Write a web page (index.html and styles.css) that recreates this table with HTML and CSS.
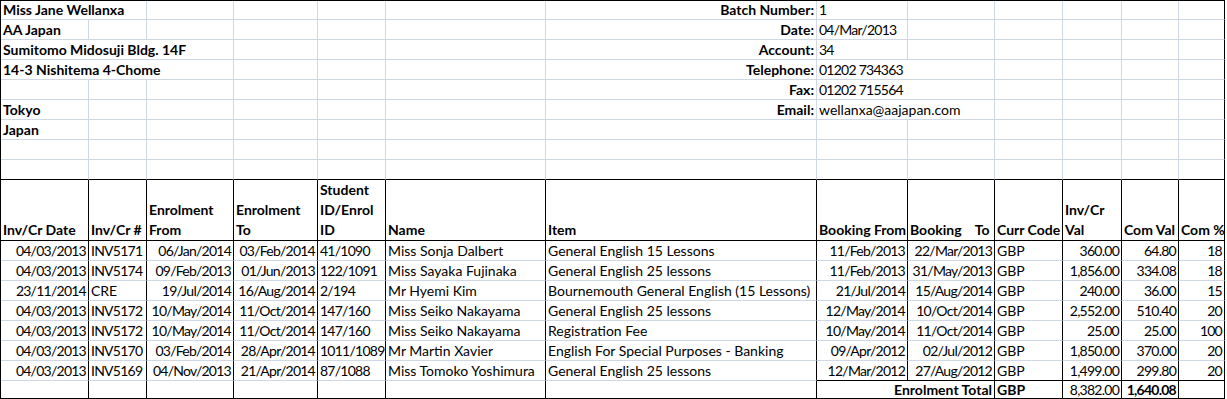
FILE: index.html
```html
<!DOCTYPE html>
<html lang="en">
<head>
<meta charset="utf-8">
<title>Enrolment Statement</title>
<link rel="stylesheet" href="styles.css">
</head>
<body>
<div class="sheet">
  <!-- row 1 -->
  <div class="c s2 b">Miss Jane Wellanxa</div><div class="c"></div><div class="c"></div><div class="c"></div><div class="c"></div>
  <div class="c r b">Batch Number:</div><div class="c n">1</div><div class="c"></div><div class="c"></div><div class="c"></div><div class="c"></div><div class="c k"></div>
  <!-- row 2 -->
  <div class="c b">AA Japan</div><div class="c"></div><div class="c"></div><div class="c"></div><div class="c"></div><div class="c"></div>
  <div class="c r b">Date:</div><div class="c n">04/Mar/2013</div><div class="c"></div><div class="c"></div><div class="c"></div><div class="c"></div><div class="c k"></div>
  <!-- row 3 -->
  <div class="c s3 b">Sumitomo Midosuji Bldg. 14F</div><div class="c"></div><div class="c"></div><div class="c"></div>
  <div class="c r b">Account:</div><div class="c n">34</div><div class="c"></div><div class="c"></div><div class="c"></div><div class="c"></div><div class="c k"></div>
  <!-- row 4 -->
  <div class="c s3 b">14-3 Nishitema 4-Chome</div><div class="c"></div><div class="c"></div><div class="c"></div>
  <div class="c r b">Telephone:</div><div class="c s2 n">01202 734363</div><div class="c"></div><div class="c"></div><div class="c"></div><div class="c k"></div>
  <!-- row 5 -->
  <div class="c"></div><div class="c"></div><div class="c"></div><div class="c"></div><div class="c"></div><div class="c"></div>
  <div class="c r b">Fax:</div><div class="c s2 n">01202 715564</div><div class="c"></div><div class="c"></div><div class="c"></div><div class="c k"></div>
  <!-- row 6 -->
  <div class="c b">Tokyo</div><div class="c"></div><div class="c"></div><div class="c"></div><div class="c"></div><div class="c"></div>
  <div class="c r b">Email:</div><div class="c s2">wellanxa@aajapan.com</div><div class="c"></div><div class="c"></div><div class="c"></div><div class="c k"></div>
  <!-- row 7 -->
  <div class="c b">Japan</div><div class="c"></div><div class="c"></div><div class="c"></div><div class="c"></div><div class="c"></div>
  <div class="c"></div><div class="c"></div><div class="c"></div><div class="c"></div><div class="c"></div><div class="c"></div><div class="c k"></div>
  <!-- row 8 -->
  <div class="c"></div><div class="c"></div><div class="c"></div><div class="c"></div><div class="c"></div><div class="c"></div>
  <div class="c"></div><div class="c"></div><div class="c"></div><div class="c"></div><div class="c"></div><div class="c"></div><div class="c k"></div>
  <!-- row 9 -->
  <div class="c u"></div><div class="c u"></div><div class="c u"></div><div class="c u"></div><div class="c u"></div><div class="c u"></div>
  <div class="c u"></div><div class="c u"></div><div class="c u"></div><div class="c u"></div><div class="c u"></div><div class="c u"></div><div class="c u k"></div>

  <!-- header -->
  <div class="c h"><span>Inv/Cr Date</span></div>
  <div class="c h"><span>Inv/Cr #</span></div>
  <div class="c h"><span>Enrolment<br>From</span></div>
  <div class="c h"><span>Enrolment<br>To</span></div>
  <div class="c h"><span>Student<br>ID/Enrol<br>ID</span></div>
  <div class="c h"><span>Name</span></div>
  <div class="c h"><span>Item</span></div>
  <div class="c h"><span>Booking From</span></div>
  <div class="c h"><span>Booking&nbsp;&nbsp;&nbsp; To</span></div>
  <div class="c h"><span>Curr Code</span></div>
  <div class="c h"><span>Inv/Cr<br>Val</span></div>
  <div class="c h"><span>Com Val</span></div>
  <div class="c h"><span>Com %</span></div>

  <!-- data 1 -->
  <div class="c d r n">04/03/2013</div><div class="c d n">INV5171</div><div class="c d r n">06/Jan/2014</div><div class="c d r n">03/Feb/2014</div><div class="c d n">41/1090</div><div class="c d">Miss Sonja Dalbert</div><div class="c d">General English 15 Lessons</div><div class="c d r n">11/Feb/2013</div><div class="c d r n">22/Mar/2013</div><div class="c d">GBP</div><div class="c d r n">360.00</div><div class="c d r n">64.80</div><div class="c d r n">18</div>
  <!-- data 2 -->
  <div class="c d r n">04/03/2013</div><div class="c d n">INV5174</div><div class="c d r n">09/Feb/2013</div><div class="c d r n">01/Jun/2013</div><div class="c d n">122/1091</div><div class="c d">Miss Sayaka Fujinaka</div><div class="c d">General English 25 lessons</div><div class="c d r n">11/Feb/2013</div><div class="c d r n">31/May/2013</div><div class="c d">GBP</div><div class="c d r n">1,856.00</div><div class="c d r n">334.08</div><div class="c d r n">18</div>
  <!-- data 3 -->
  <div class="c d r n">23/11/2014</div><div class="c d">CRE</div><div class="c d r n">19/Jul/2014</div><div class="c d r n">16/Aug/2014</div><div class="c d n">2/194</div><div class="c d">Mr Hyemi Kim</div><div class="c d">Bournemouth General English (15 Lessons)</div><div class="c d r n">21/Jul/2014</div><div class="c d r n">15/Aug/2014</div><div class="c d">GBP</div><div class="c d r n">240.00</div><div class="c d r n">36.00</div><div class="c d r n">15</div>
  <!-- data 4 -->
  <div class="c d r n">04/03/2013</div><div class="c d n">INV5172</div><div class="c d r n">10/May/2014</div><div class="c d r n">11/Oct/2014</div><div class="c d n">147/160</div><div class="c d">Miss Seiko Nakayama</div><div class="c d">General English 25 lessons</div><div class="c d r n">12/May/2014</div><div class="c d r n">10/Oct/2014</div><div class="c d">GBP</div><div class="c d r n">2,552.00</div><div class="c d r n">510.40</div><div class="c d r n">20</div>
  <!-- data 5 -->
  <div class="c d r n">04/03/2013</div><div class="c d n">INV5172</div><div class="c d r n">10/May/2014</div><div class="c d r n">11/Oct/2014</div><div class="c d n">147/160</div><div class="c d">Miss Seiko Nakayama</div><div class="c d">Registration Fee</div><div class="c d r n">10/May/2014</div><div class="c d r n">11/Oct/2014</div><div class="c d">GBP</div><div class="c d r n">25.00</div><div class="c d r n">25.00</div><div class="c d r n">100</div>
  <!-- data 6 -->
  <div class="c d r n">04/03/2013</div><div class="c d n">INV5170</div><div class="c d r n">03/Feb/2014</div><div class="c d r n">28/Apr/2014</div><div class="c d n">1011/1089</div><div class="c d">Mr Martin Xavier</div><div class="c d">English For Special Purposes - Banking</div><div class="c d r n">09/Apr/2012</div><div class="c d r n">02/Jul/2012</div><div class="c d">GBP</div><div class="c d r n">1,850.00</div><div class="c d r n">370.00</div><div class="c d r n">20</div>
  <!-- data 7 -->
  <div class="c d r n">04/03/2013</div><div class="c d n">INV5169</div><div class="c d r n">04/Nov/2013</div><div class="c d r n">21/Apr/2014</div><div class="c d n">87/1088</div><div class="c d">Miss Tomoko Yoshimura</div><div class="c d">General English 25 lessons</div><div class="c d r u n">12/Mar/2012</div><div class="c d r u n">27/Aug/2012</div><div class="c d u">GBP</div><div class="c d r u n">1,499.00</div><div class="c d r u n">299.80</div><div class="c d r u n">20</div>

  <!-- total -->
  <div class="c d u t"></div><div class="c d u t"></div><div class="c d u t"></div><div class="c d u t"></div><div class="c d u t"></div><div class="c d u t"></div><div class="c d u t"></div>
  <div class="c d u t s2 r b">Enrolment Total</div><div class="c d u t b">GBP</div><div class="c d u t r n">8,382.00</div><div class="c d u t r b n">1,640.08</div><div class="c d u t"></div>
</div>
</body>
</html>
```

FILE: styles.css
```css
html, body {
  margin: 0;
  padding: 0;
  background: #ffffff;
}

body {
  font-family: Lato, "Liberation Sans", sans-serif;
  font-size: 14px;
  color: #000000;
}

.sheet {
  display: grid;
  grid-template-columns: 88px 58px 87px 84px 68px 160px 271px 91px 87px 68px 59px 57px 46px;
  grid-template-rows: 19px repeat(8, 20px) 61px repeat(7, 20px) 18px;
  width: max-content;
  border-left: 1px solid #000000;
  border-top: 1px solid #000000;
}

.c {
  display: flex;
  align-items: flex-end;
  padding: 0 2px;
  line-height: 19px;
  white-space: nowrap;
  overflow: visible;
  border-right: 1px solid #d0d7e5;
  border-bottom: 1px solid #d0d7e5;
  min-width: 0;
}

.s2 { grid-column: span 2; }
.s3 { grid-column: span 3; }

.r { justify-content: flex-end; }
.b { font-weight: 700; }
.n { letter-spacing: -0.75px; }

.k { border-right-color: #000000; }
.u { border-bottom-color: #000000; }

.h {
  font-weight: 700;
  line-height: 20px;
  border-right-color: #000000;
  border-bottom-color: #000000;
}

.d { border-right-color: #000000; }

.t { line-height: 17px; }
```
